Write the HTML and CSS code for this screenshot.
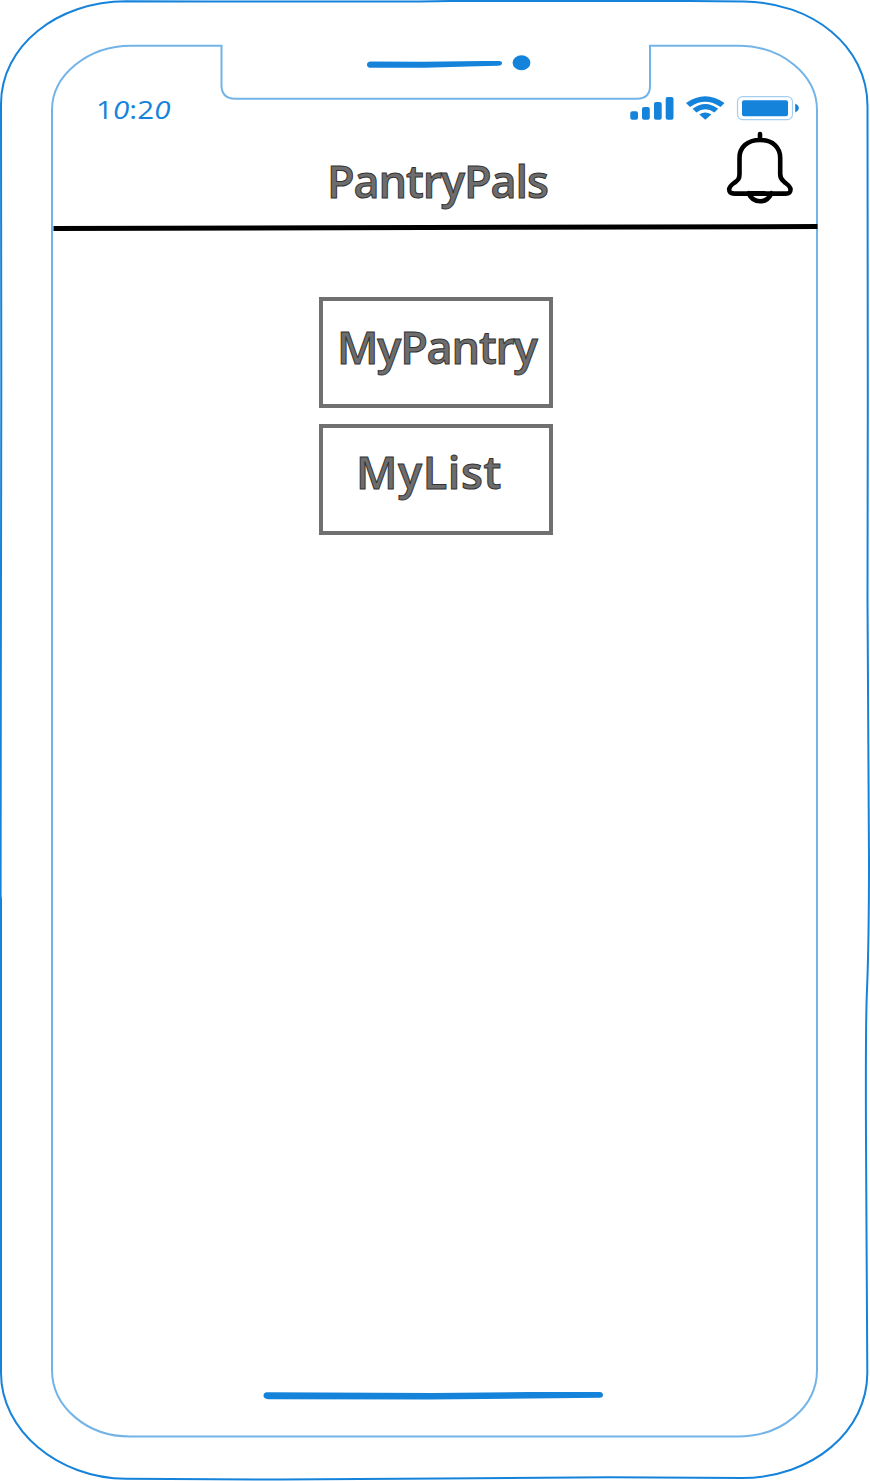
FILE: index.html
```html
<!DOCTYPE html>
<html lang="en">
<head>
<meta charset="utf-8">
<title>PantryPals</title>
<link rel="stylesheet" href="styles.css">
</head>
<body>
<main class="phone">
  <svg class="phone-frame" viewBox="0 0 870 1481" fill="none" aria-hidden="true">
    <path class="shell" d="M126 1.3L210 1.6L420 1.4L450 1L690 1.1L744 1.5C812 2 867.5 46 867.5 106L867.8 400L867.5 600L869 860Q869 940 867 990Q865.5 1020 866 1140L867.3 1372C868 1431 812 1478 742 1478L610 1477.3L440 1478.6L280 1479.6L126 1478.8C57 1478 1 1430 1 1373L1 899L.6 896L.8 700L1.3 380L1 104C1 46 57 1.5 126 1.3Z"/>
    <path class="screen-edge" d="M131 45.7H221.5V86Q222 98.5 235 98.7H637Q650 98.5 650 86V45.7H738C782 45.7 817 75 817 110V1370C817 1407 782 1436.5 738 1436.5H130C87 1436.5 52 1407 52 1370V110C52 75 88 45.7 131 45.7Z"/>
  </svg>

  <div class="notch">
    <svg class="speaker" width="167" height="18" viewBox="0 0 167 18" aria-hidden="true">
      <path d="M5 6.500L58 6.700L118 6H134Q137.500 6.200 137 8.500Q136.500 10.700 133 10.700L112 11.200L60 12.700H5Q2 12.200 2 9.700Q2 7 5 6.500Z"/>
      <ellipse cx="156.500" cy="7.700" rx="8.900" ry="7.500"/>
    </svg>
  </div>

  <div class="status">
    <time class="clock">1<i>0</i>:2<i>0</i></time>
    <svg class="indicators" width="170" height="26" viewBox="630 95 170 26" aria-hidden="true">
      <rect x="630.300" y="111.200" width="7.700" height="8.600" rx="2"/>
      <rect x="642" y="107" width="7.800" height="12.800" rx="2"/>
      <rect x="654" y="102" width="7.700" height="17.800" rx="2"/>
      <rect x="665.700" y="97" width="7.800" height="22.800" rx="2"/>
      <path d="M686 103Q705.200 89.500 724.500 103L720.500 106.900Q705.200 96.500 690 106.900Z"/>
      <path d="M692.600 108.800Q705.200 99 718.200 108.800L714.400 112.500Q705.200 106 696.400 112.500Z"/>
      <path d="M699.300 114.500Q705.200 110.500 711.400 114.500L705.300 119.800Z"/>
      <rect class="battery-case" x="737.500" y="96.700" width="55" height="22.900" rx="5"/>
      <rect x="742" y="100.300" width="46" height="15.900" rx="2"/>
      <path d="M795.200 103.800Q798.700 105 798.800 108Q798.700 111 795.200 112.400Z"/>
    </svg>
  </div>

  <header class="app-header">
    <h1 class="label title">PantryPals</h1>
    <svg class="bell" width="70" height="76" viewBox="725 130 70 76" aria-label="Notifications">
      <path d="M760 134V140M760 140C747 140 739.500 147.500 739.500 158V174C739.500 180 737 180.500 734 183C730.500 185.500 729.200 187.500 729.200 189.500C729.200 192.300 730.500 193.600 734.500 193.600H785.500C789.500 193.600 790.500 192.300 790.500 189.500C790.500 187.500 789 185.500 785.500 183C783 180.500 780.200 180 780.200 174V158C780.200 147.500 773 140 760 140ZM748.500 193.200H765M748.500 193.200C753.500 204 766.500 204 771.500 193.200"/>
    </svg>
  </header>
  <svg class="rule" width="765" height="8" viewBox="53 224 765 8" aria-hidden="true">
    <path d="M53.500 228.500L817.500 226.500"/>
  </svg>

  <nav class="menu">
    <button class="menu-button"><span class="label pantry">MyPantry</span></button>
    <button class="menu-button"><span class="label list">MyList</span></button>
  </nav>

  <svg class="home-bar" width="342" height="12" viewBox="262 1390 342 12" aria-hidden="true">
    <path d="M267 1392.300L433 1393L530 1392H600Q603 1392.300 603 1395Q603 1397.500 600 1397.800L430 1399.500L268 1399.200Q263.500 1398.700 263.500 1395.800Q263.500 1392.500 267 1392.300Z"/>
  </svg>
</main>
</body>
</html>
```
FILE: styles.css
```css
* { box-sizing: border-box; }
body {
  margin: 0;
  background: #fff;
  font-family: "Open Sans", "Noto Sans", sans-serif;
}
.phone {
  position: relative;
  isolation: isolate;
  width: 870px;
  height: 1481px;
  display: flex;
  flex-direction: column;
  overflow: hidden;
}
.phone svg { display: block; flex: none; }
.phone .phone-frame {
  position: absolute;
  inset: 0;
  z-index: -1;
  width: 870px;
  height: 1481px;
  pointer-events: none;
}
.shell { stroke: #1683db; stroke-width: 2; }
.screen-edge { stroke: #73b4e8; stroke-width: 2; }
.notch { height: 95px; padding: 55px 0 0 365px; }
.speaker, .indicators, .home-bar { fill: #1683db; }
.status {
  height: 35px;
  display: flex;
  justify-content: space-between;
  padding: 0 70px 0 96px;
}
.clock {
  color: #1683db;
  font-size: 25px;
  font-weight: 500;
  line-height: 28px;
  letter-spacing: 0.1px;
  transform: scaleX(1.18);
  transform-origin: left;
}
.battery-case { fill: none; stroke: #a4cff1; stroke-width: 1.2; }
.app-header {
  height: 94px;
  display: flex;
  justify-content: space-between;
  padding: 0 75px 0 327px;
}
.title { margin: 21px 0 0; }
.bell {
  fill: none;
  stroke: #000;
  stroke-width: 4.6;
  stroke-linecap: round;
  stroke-linejoin: round;
}
.label {
  display: block;
  color: #6d6d6d;
  font-family: "Open Sans", "Noto Sans", sans-serif;
  font-size: 45px;
  font-weight: 600;
  line-height: 60px;
  white-space: nowrap;
  -webkit-text-stroke: 1px #333;
}
.title { letter-spacing: -1.1px; }
.rule { margin-left: 53px; stroke: #000; stroke-width: 5; overflow: visible; }
.menu {
  display: flex;
  flex-direction: column;
  align-items: center;
  gap: 16px;
  padding: 65px 0 0 2px;
}
.menu-button {
  display: flex;
  width: 234px;
  height: 111px;
  padding: 0;
  background: none;
  border: 4px solid #707070;
  text-align: left;
}
.pantry { padding: 16px 0 0 14px; letter-spacing: -1.2px; }
.list { padding: 14px 0 0 33px; letter-spacing: 0.6px; }
.home-bar { margin: auto 0 79px 262px; }
```
